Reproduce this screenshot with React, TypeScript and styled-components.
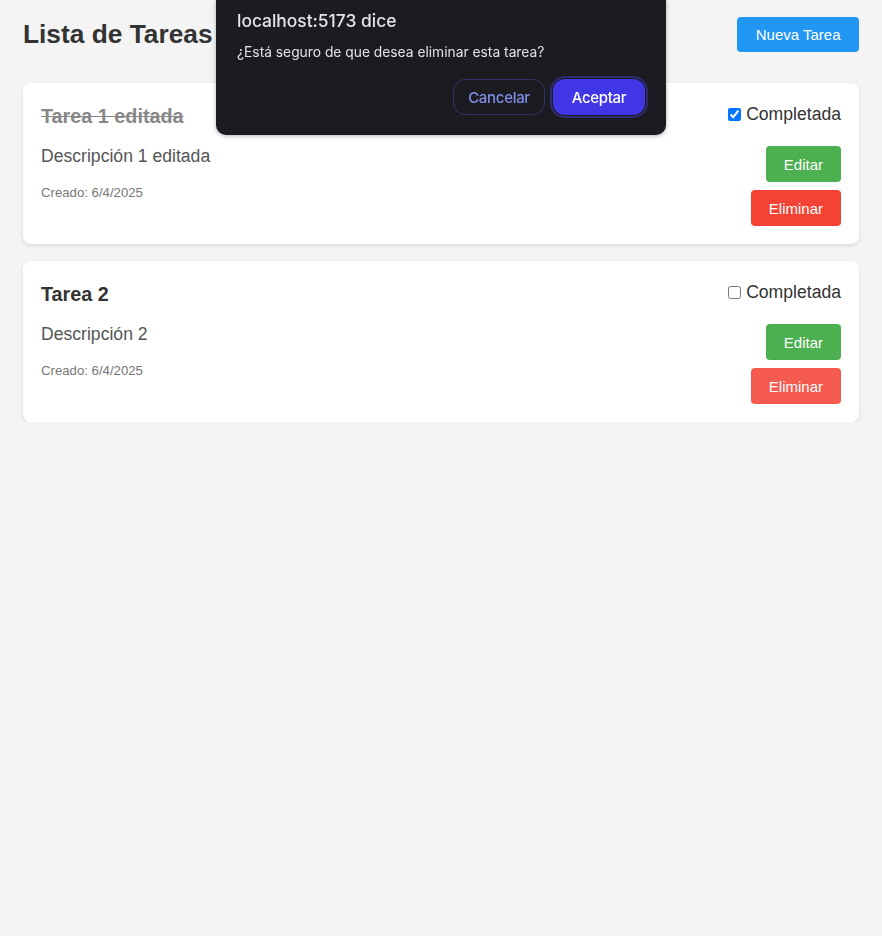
import React from "react";
import styled, { createGlobalStyle } from "styled-components";

const GlobalStyle = createGlobalStyle`
  html, body {
    background: #f4f4f4;
  }
  body {
    margin: 8px;
    font-family: "Liberation Sans", Arial, sans-serif;
    color: #333;
  }
`;

const Container = styled.div`
  padding: 0 15px;
`;

const Header = styled.header`
  display: flex;
  justify-content: space-between;
  align-items: center;
  margin-top: 9px;
  height: 35px;
`;

const PageTitle = styled.h1`
  margin: 0;
  font-size: 26.3px;
  font-weight: bold;
  color: #333;
  line-height: 35px;
`;

const Button = styled.button<{ $color: string }>`
  border: none;
  border-radius: 4px;
  background: ${(p) => p.$color};
  color: #fff;
  font-family: "Liberation Sans", Arial, sans-serif;
  font-size: 15px;
  height: 36px;
  padding: 0 18px;
  cursor: pointer;
`;

const NewButton = styled(Button)`
  height: 35px;
  padding: 0 18.5px;
`;

const List = styled.div`
  display: flex;
  flex-direction: column;
  gap: 17px;
  margin-top: 31px;
`;

const Card = styled.div`
  background: #fff;
  border-radius: 8px;
  box-shadow: 0 2px 4px rgba(0, 0, 0, 0.1);
  padding: 18px;
`;

const CardHeader = styled.div`
  display: flex;
  justify-content: space-between;
  align-items: center;
  height: 30px;
  margin-bottom: 15px;
`;

const TaskTitle = styled.h3<{ $done: boolean }>`
  margin: 0;
  font-size: 19.8px;
  font-weight: bold;
  color: ${(p) => (p.$done ? "#888" : "#333")};
  text-decoration: ${(p) => (p.$done ? "line-through" : "none")};
`;

const CheckLabel = styled.label`
  display: flex;
  align-items: center;
  font-size: 17.6px;
  color: #333;
  margin-top: -3px;
`;

const Check = styled.input`
  width: 13px;
  height: 13px;
  margin: 0 5px 0 0;
`;

const CardBody = styled.div`
  display: flex;
  justify-content: space-between;
  align-items: flex-start;
`;

const Info = styled.div`
  display: flex;
  flex-direction: column;
`;

const Description = styled.p`
  margin: 0;
  font-size: 17.6px;
  line-height: 20px;
  color: #555;
`;

const Created = styled.small`
  margin-top: 19px;
  font-size: 13.2px;
  line-height: 15px;
  color: #777;
`;

const Actions = styled.div`
  display: flex;
  flex-direction: column;
  align-items: flex-end;
  gap: 8px;
`;

const Dialog = styled.div`
  position: fixed;
  top: 0;
  left: 216px;
  width: 450px;
  height: 135px;
  box-sizing: border-box;
  padding: 10px 21px 0;
  background: #1c1b21;
  border-radius: 0 0 10px 10px;
  box-shadow: 0 1px 4px rgba(0, 0, 0, 0.3);
  font-family: Inter, "Noto Sans", sans-serif;
  display: flex;
  flex-direction: column;
`;

const DialogTitle = styled.div`
  font-size: 17.4px;
  line-height: 22px;
  color: #e6e6ea;
  font-weight: 500;
`;

const DialogMessage = styled.div`
  margin-top: 10px;
  font-size: 13.8px;
  line-height: 20px;
  color: #e2e2e6;
`;

const DialogActions = styled.div`
  display: flex;
  justify-content: flex-end;
  gap: 8px;
  margin-top: 17px;
`;

const DialogButton = styled.button<{ $primary?: boolean }>`
  width: 92px;
  height: 36px;
  border-radius: 12px;
  font-family: Inter, "Noto Sans", sans-serif;
  font-size: 15px;
  font-weight: 500;
  letter-spacing: -0.3px;
  cursor: pointer;
  border: ${(p) => (p.$primary ? "none" : "1px solid #2f3368")};
  background: ${(p) => (p.$primary ? "#4237e6" : "transparent")};
  color: ${(p) => (p.$primary ? "#ffffff" : "#7f8fe6")};
  box-shadow: ${(p) =>
    p.$primary ? "0 0 0 1px #1c1b21, 0 0 0 3px #2d2c70" : "none"};
`;

type Task = {
  title: string;
  description: string;
  created: string;
  done: boolean;
  deleteColor: string;
};

const tasks: Task[] = [
  {
    title: "Tarea 1 editada",
    description: "Descripción 1 editada",
    created: "6/4/2025",
    done: true,
    deleteColor: "#f44336",
  },
  {
    title: "Tarea 2",
    description: "Descripción 2",
    created: "6/4/2025",
    done: false,
    deleteColor: "#f55a4f",
  },
];

export default function App() {
  return (
    <>
      <GlobalStyle />
      <Container>
        <Header>
          <PageTitle>Lista de Tareas</PageTitle>
          <NewButton $color="#2196f3">Nueva Tarea</NewButton>
        </Header>
        <List>
          {tasks.map((t) => (
            <Card key={t.title}>
              <CardHeader>
                <TaskTitle $done={t.done}>{t.title}</TaskTitle>
                <CheckLabel>
                  <Check type="checkbox" defaultChecked={t.done} />
                  Completada
                </CheckLabel>
              </CardHeader>
              <CardBody>
                <Info>
                  <Description>{t.description}</Description>
                  <Created>Creado: {t.created}</Created>
                </Info>
                <Actions>
                  <Button $color="#4caf50">Editar</Button>
                  <Button $color={t.deleteColor}>Eliminar</Button>
                </Actions>
              </CardBody>
            </Card>
          ))}
        </List>
      </Container>
      <Dialog role="dialog">
        <DialogTitle>localhost:5173 dice</DialogTitle>
        <DialogMessage>¿Está seguro de que desea eliminar esta tarea?</DialogMessage>
        <DialogActions>
          <DialogButton>Cancelar</DialogButton>
          <DialogButton $primary>Aceptar</DialogButton>
        </DialogActions>
      </Dialog>
    </>
  );
}
